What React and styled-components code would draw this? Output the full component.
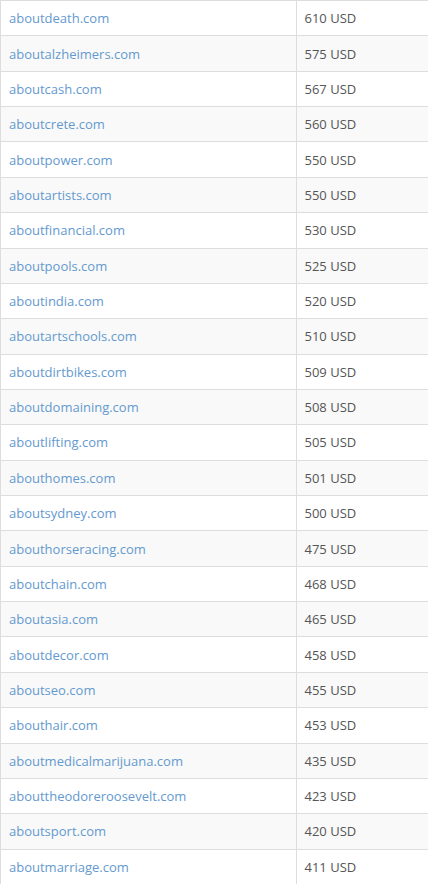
import React from "react";
import styled, { createGlobalStyle } from "styled-components";

const Global = createGlobalStyle`
  html, body { margin: 0; padding: 0; background: #fff; }
  body { font-family: "Open Sans", "Liberation Sans", sans-serif; overflow: hidden; }
`;

const Table = styled.table`
  width: 440px;
  border-collapse: collapse;
  border-spacing: 0;
  font-size: 13px;
  table-layout: fixed;
`;

const Row = styled.tr`
  height: 35.36px;
  background: ${(p) => (p.$odd ? "#ffffff" : "#f9f9f9")};
`;

const Cell = styled.td`
  box-sizing: border-box;
  border: 1px solid #dddddd;
  border-right-width: ${(p) => (p.$last ? "0" : "1px")};
  padding: 0 8px;
  vertical-align: middle;
  line-height: 18px;
  color: #555555;
  width: ${(p) => p.$w || "auto"};
  white-space: nowrap;
`;

const Link = styled.a`
  color: #6499cf;
  text-decoration: none;
`;

const data = [
  ["aboutdeath.com", 610],
  ["aboutalzheimers.com", 575],
  ["aboutcash.com", 567],
  ["aboutcrete.com", 560],
  ["aboutpower.com", 550],
  ["aboutartists.com", 550],
  ["aboutfinancial.com", 530],
  ["aboutpools.com", 525],
  ["aboutindia.com", 520],
  ["aboutartschools.com", 510],
  ["aboutdirtbikes.com", 509],
  ["aboutdomaining.com", 508],
  ["aboutlifting.com", 505],
  ["abouthomes.com", 501],
  ["aboutsydney.com", 500],
  ["abouthorseracing.com", 475],
  ["aboutchain.com", 468],
  ["aboutasia.com", 465],
  ["aboutdecor.com", 458],
  ["aboutseo.com", 455],
  ["abouthair.com", 453],
  ["aboutmedicalmarijuana.com", 435],
  ["abouttheodoreroosevelt.com", 423],
  ["aboutsport.com", 420],
  ["aboutmarriage.com", 411],
];

export default function App() {
  return (
    <>
      <Global />
      <Table>
        <tbody>
          {data.map(([d, p], i) => (
            <Row key={d} $odd={i % 2 === 0}>
              <Cell $w="295.5px">
                <Link href="#">{d}</Link>
              </Cell>
              <Cell $last>{p} USD</Cell>
            </Row>
          ))}
        </tbody>
      </Table>
    </>
  );
}
